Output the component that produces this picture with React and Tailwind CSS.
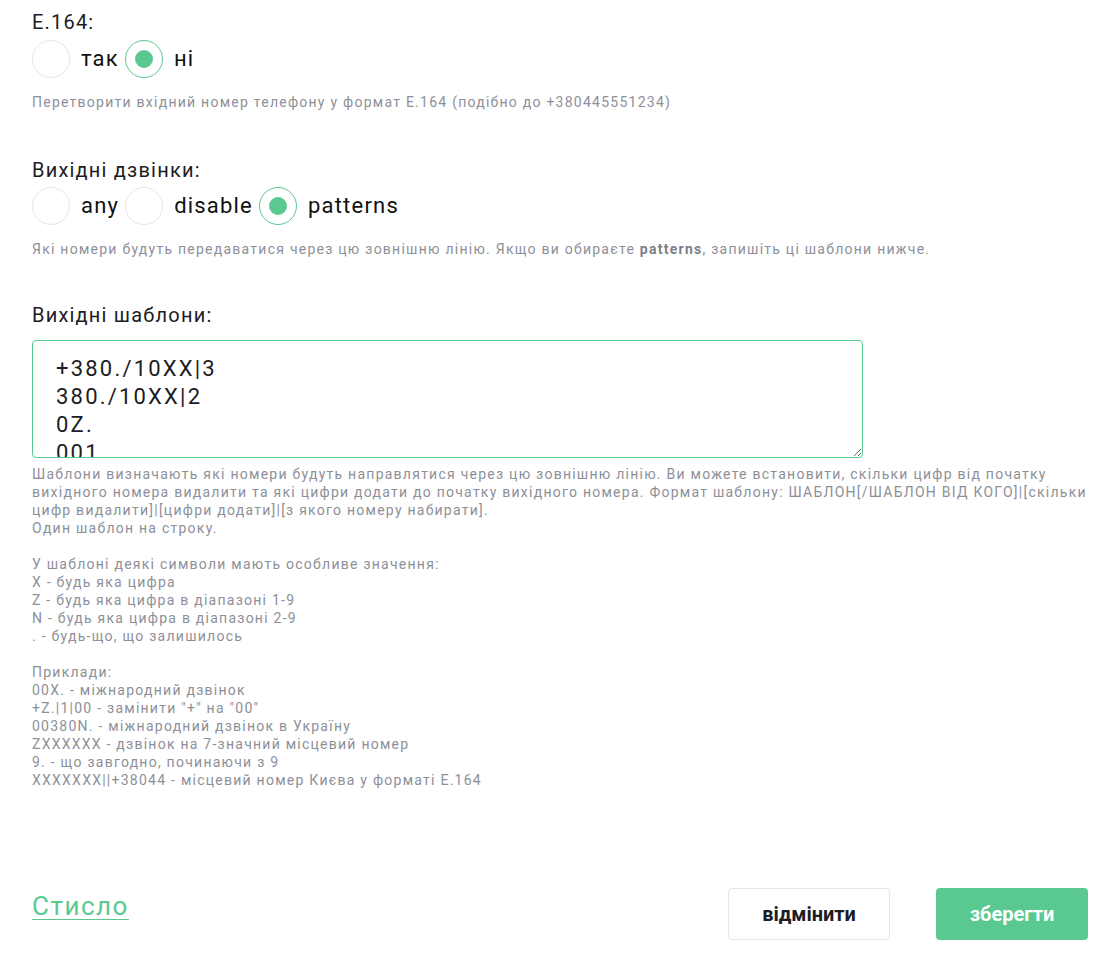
import { useState } from "react";

function Radio({ checked, label, onClick }) {
  return (
    <label onClick={onClick} className="flex cursor-pointer items-center">
      <span
        className={
          "flex h-[38px] w-[38px] items-center justify-center rounded-full border " +
          (checked ? "border-[#5ac991]" : "border-[#e6e6ea]")
        }
      >
        {checked && <span className="h-[18px] w-[18px] rounded-full bg-[#5ac991]" />}
      </span>
      <span className="ml-[11px] mr-[6px] text-[22px] leading-[28px] tracking-[1.2px] text-[#111]">{label}</span>
    </label>
  );
}

const patterns = "+380./10XX|3\n380./10XX|2\n0Z.\n001";

const help = `Шаблони визначають які номери будуть направлятися через цю зовнішню лінію. Ви можете встановити, скільки цифр від початку вихідного номера видалити та які цифри додати до початку вихідного номера. Формат шаблону: ШАБЛОН[/ШАБЛОН ВІД КОГО]|[скільки цифр видалити]|[цифри додати]|[з якого номеру набирати].
Один шаблон на строку.

У шаблоні деякі символи мають особливе значення:
X - будь яка цифра
Z - будь яка цифра в діапазоні 1-9
N - будь яка цифра в діапазоні 2-9
. - будь-що, що залишилось

Приклади:
00X. - міжнародний дзвінок
+Z.|1|00 - замінити "+" на "00"
00380N. - міжнародний дзвінок в Україну
ZXXXXXX - дзвінок на 7-значний місцевий номер
9. - що завгодно, починаючи з 9
XXXXXXX||+38044 - місцевий номер Києва у форматі E.164`;

export default function App() {
  const [e164, setE164] = useState("no");
  const [outgoing, setOutgoing] = useState("patterns");
  const [text, setText] = useState(patterns);

  return (
    <div className="min-h-[953px] bg-white pl-8 pr-[8px] pt-[9px] font-['Roboto',sans-serif] text-[#1c1c24]">
      <div className="text-[20px] leading-[26px] tracking-[1.2px]">E.164:</div>
      <div className="mt-[5px] flex">
        <Radio label="так" checked={e164 === "yes"} onClick={() => setE164("yes")} />
        <Radio label="ні" checked={e164 === "no"} onClick={() => setE164("no")} />
      </div>
      <p className="mt-[15px] text-[14px] leading-[18px] tracking-[1.25px] text-[#8d9099]">
        Перетворити вхідний номер телефону у формат E.164 (подібно до +380445551234)
      </p>

      <div className="mt-[46px] text-[20px] leading-[26px] tracking-[1.2px]">Вихідні дзвінки:</div>
      <div className="mt-[4px] flex">
        <Radio label="any" checked={outgoing === "any"} onClick={() => setOutgoing("any")} />
        <Radio label="disable" checked={outgoing === "disable"} onClick={() => setOutgoing("disable")} />
        <Radio label="patterns" checked={outgoing === "patterns"} onClick={() => setOutgoing("patterns")} />
      </div>
      <p className="mt-[15px] text-[14px] leading-[18px] tracking-[1.25px] text-[#8d9099]">
        Які номери будуть передаватися через цю зовнішню лінію. Якщо ви обираєте{" "}
        <b className="font-bold text-[#7d808a]">patterns</b>, запишіть ці шаблони нижче.
      </p>

      <div className="mt-[44px] text-[20px] leading-[26px] tracking-[1.2px]">Вихідні шаблони:</div>
      <textarea
        autoFocus
        value={text}
        onChange={(e) => setText(e.target.value)}
        onFocus={(e) => e.target.setSelectionRange(0, 0)}
        className="mt-[12px] block h-[118px] w-[831px] resize-y rounded-[4px] border border-[#5ac991] px-[23px] pt-[14px] text-[22px] leading-[28px] tracking-[2.2px] text-[#1c1c24] caret-[#1c1c24] outline-none"
      />
      <p className="mt-[7px] whitespace-pre-line text-[14px] leading-[18px] tracking-[1.25px] text-[#8d9099]">
        {help}
      </p>

      <div className="mt-[99px] flex items-start justify-between pb-[13px] pr-[4px]">
        <a
          href="#"
          className="mt-[2px] text-[26px] leading-[32px] tracking-[1.5px] text-[#5ac991] underline decoration-1 underline-offset-[4px]"
        >
          Стисло
        </a>
        <div className="flex gap-[46px]">
          <button className="h-[52px] w-[162px] rounded-[4px] border border-[#e4e4ea] bg-white text-[20px] font-bold text-[#1c1c24]">
            відмінити
          </button>
          <button className="h-[52px] w-[152px] rounded-[4px] bg-[#5ac991] text-[20px] font-bold text-white">
            зберегти
          </button>
        </div>
      </div>
    </div>
  );
}
